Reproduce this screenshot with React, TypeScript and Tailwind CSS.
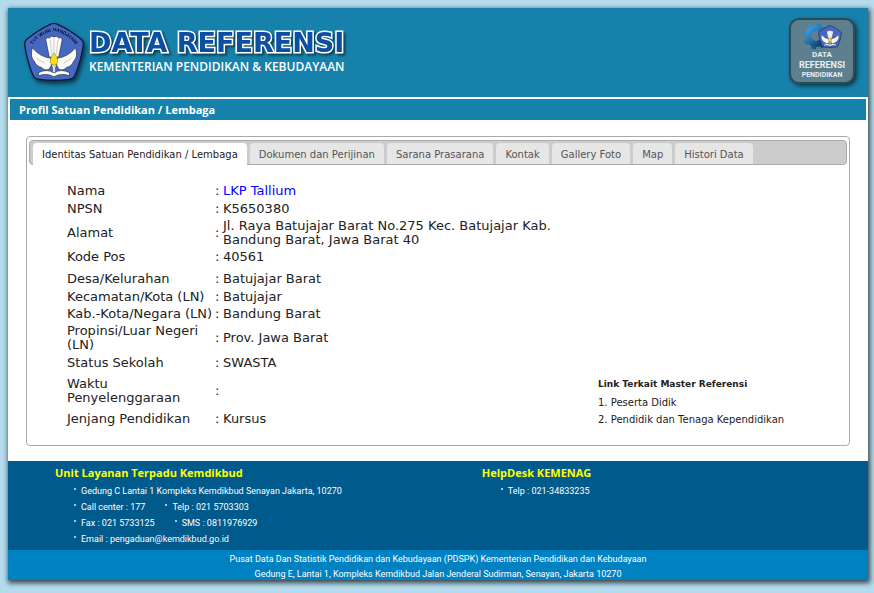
import React, { useState } from 'react';

const tabs = [
    'Identitas Satuan Pendidikan / Lembaga',
    'Dokumen dan Perijinan',
    'Sarana Prasarana',
    'Kontak',
    'Gallery Foto',
    'Map',
    'Histori Data',
];

const rows = [
    { label: 'Nama', value: 'LKP Tallium', link: true, height: 'h-[18px]' },
    { label: 'NPSN', value: 'K5650380', height: 'h-[17px]' },
    { label: 'Alamat', value: 'Jl. Raya Batujajar Barat No.275 Kec. Batujajar Kab. Bandung Barat, Jawa Barat 40', height: 'h-[31px]' },
    { label: 'Kode Pos', value: '40561', height: 'h-[18px]' },
    { label: 'Desa/Kelurahan', value: 'Batujajar Barat', height: 'h-[22px] *:pt-1' },
    { label: 'Kecamatan/Kota (LN)', value: 'Batujajar', height: 'h-[17px]' },
    { label: 'Kab.-Kota/Negara (LN)', value: 'Bandung Barat', height: 'h-[18px]' },
    { label: 'Propinsi/Luar Negeri (LN)', value: 'Prov. Jawa Barat', height: 'h-[30px]' },
    { label: 'Status Sekolah', value: 'SWASTA', height: 'h-[19px]' },
    { label: 'Waktu Penyelenggaraan', value: '', height: 'h-[38px]' },
    { label: 'Jenjang Pendidikan', value: 'Kursus', height: 'h-[18px]' },
];

// bird, flame and open book inside the pentagon, drawn on a 60x60 grid
function Emblem() {
    return (
        <>
            <path
                d="M27 2 Q30 0.8 33 2 Q46 8 56 16.500 Q59 19 58.400 22 Q56 38 50.500 51 Q49 54.800 45.500 55.200 Q30 57.500 14.500 55.200 Q11 54.800 9.500 51 Q4 38 1.600 22 Q1 19 4 16.500 Q14 8 27 2 Z"
                fill="#4668c0"
                stroke="#111c3c"
                strokeWidth="1.3"
            />
            <g fill="#fbfaf5" stroke="#1b2440" strokeWidth="0.6">
                <path d="M22 17 Q23 14 25.500 15.500 Q27.500 12.500 30 14.500 Q32.500 12.500 34.500 15.500 Q37 14 38 17 L34.500 34 H25.500 Z" />
                <path d="M26.500 35 Q17 34 9 25 Q6.500 34 11 38 Q13 43 18 44 Q20 47 25 46 L28 41 Z" />
                <path d="M33.500 35 Q43 34 51 25 Q53.500 34 49 38 Q47 43 42 44 Q40 47 35 46 L32 41 Z" />
                <path d="M15 49 Q23 45 30 49 Q37 45 45 49 L45 52 Q37 49 30 53 Q23 49 15 52 Z" />
            </g>
            <path d="M26 17 L28 32 M30 16 V31 M34 17 L32 32 M13 35 L21 40 M47 35 L39 40" stroke="#b9bdc6" strokeWidth="0.7" fill="none" />
            <path d="M27 41 H33 L31.500 44 V49 H28.500 V44 Z" fill="#d7dbe4" stroke="#333" strokeWidth="0.5" />
            <path d="M30 30 Q35 36 33.200 40 Q30 43.500 26.800 40 Q25 36 30 30 Z" fill="#f4df18" stroke="#92801a" strokeWidth="0.5" />
        </>
    );
}

function KemdikbudLogo() {
    return (
        <svg viewBox="0 0 60 60" className="h-[62px] w-[62px] shrink-0 drop-shadow-[2px_3px_2px_rgba(0,0,0,0.6)]" role="img" aria-label="Tut Wuri Handayani">
            <Emblem />
            <path id="motto" d="M6 27 Q13 13 30 8.500 Q47 13 54 27" fill="none" />
            <text fontSize="4.600" fontWeight="bold" fill="#0d1226" fontFamily="Liberation Sans, sans-serif" textAnchor="middle">
                <textPath href="#motto" startOffset="50%">TUT WURI HANDAYANI</textPath>
            </text>
        </svg>
    );
}

function GearLogo() {
    return (
        <svg viewBox="0 0 44 28" className="h-7 w-11" aria-hidden="true">
            <defs>
                <linearGradient id="gear" x1="0" y1="0" x2="1" y2="1">
                    <stop offset="0" stopColor="#3fa0e0" />
                    <stop offset="1" stopColor="#0a3560" />
                </linearGradient>
            </defs>
            <g fill="none" stroke="url(#gear)">
                <circle cx="16" cy="14" r="8" strokeWidth="6" />
                <circle cx="16" cy="14" r="11.800" strokeWidth="3" strokeDasharray="4.600 4.660" />
            </g>
            <g transform="translate(18 3) scale(0.4)">
                <Emblem />
            </g>
        </svg>
    );
}

function Header() {
    return (
        <header className="flex h-[89px] items-start justify-between bg-[#1682ab] pr-[13px] pl-[15px]">
            <div className="flex items-start gap-1 pt-[14px] text-white">
                <KemdikbudLogo />
                <div className="pt-[7px]">
                    <h1 className="text-[27px] leading-[28px] font-bold text-[#0b4ea2] [-webkit-text-stroke:3px_white] [paint-order:stroke_fill] drop-shadow-[2px_2px_1px_rgba(0,0,0,0.5)]">
                        DATA REFERENSI
                    </h1>
                    <p className="font-['Open_Sans',sans-serif] text-[12px] leading-[20px] font-semibold">KEMENTERIAN PENDIDIKAN &amp; KEBUDAYAAN</p>
                </div>
            </div>
            <a
                href="#"
                className="mt-[10px] flex h-[66px] w-[66px] flex-col items-center rounded-[10px] border-2 border-[#2c4a58] bg-[#5d7f8e] pt-[2px] font-[Roboto,sans-serif] font-bold text-[#e6eef1] shadow-[2px_2px_4px_rgba(0,0,0,0.6)]"
            >
                <GearLogo />
                <span className="text-[8px] leading-[10px]">DATA</span>
                <span className="text-[9px] leading-[11px]">REFERENSI</span>
                <span className="text-[7px] leading-[9px]">PENDIDIKAN</span>
            </a>
        </header>
    );
}

function Bullet({ children }: { children: React.ReactNode }) {
    return (
        <span className="flex items-center gap-[5px]">
            <span className="mb-1 h-[2px] w-[2px] bg-[#8fd0ee]" />
            {children}
        </span>
    );
}

function Footer() {
    return (
        <footer className="font-[Roboto,sans-serif] text-[9px] text-white">
            <div className="flex h-[89px] bg-[#005a8c] pt-[3px] pl-[47px]">
                <section className="w-[52.5%]">
                    <h2 className="mb-px font-['Open_Sans',sans-serif] text-[11px] leading-[18px] font-bold text-[#ffff00]">Unit Layanan Terpadu Kemdikbud</h2>
                    <ul className="pl-[19px] leading-[16px]">
                        <li><Bullet>Gedung C Lantai 1 Kompleks Kemdikbud Senayan Jakarta, 10270</Bullet></li>
                        <li className="flex gap-5">
                            <Bullet>Call center : 177</Bullet>
                            <Bullet>Telp : 021 5703303</Bullet>
                        </li>
                        <li className="flex gap-5">
                            <Bullet>Fax : 021 5733125</Bullet>
                            <Bullet>SMS : 0811976929</Bullet>
                        </li>
                        <li><Bullet>Email : pengaduan@kemdikbud.go.id</Bullet></li>
                    </ul>
                </section>
                <section>
                    <h2 className="mb-px font-['Open_Sans',sans-serif] text-[11px] leading-[18px] font-bold text-[#ffff00]">HelpDesk KEMENAG</h2>
                    <ul className="pl-[19px] leading-[16px]">
                        <li><Bullet>Telp : 021-34833235</Bullet></li>
                    </ul>
                </section>
            </div>
            <div className="h-[30px] bg-[#0081c2] pt-[2px] text-center leading-[15px]">
                <p>Pusat Data Dan Statistik Pendidikan dan Kebudayaan (PDSPK) Kementerian Pendidikan dan Kebudayaan</p>
                <p>Gedung E, Lantai 1, Kompleks Kemdikbud Jalan Jenderal Sudirman, Senayan, Jakarta 10270</p>
            </div>
        </footer>
    );
}

export default function App() {
    const [active, setActive] = useState(0);

    return (
        <div className="min-h-screen bg-[#b4dcee] pt-2 pr-[6px] pb-[13px] pl-2 font-['DejaVu_Sans',sans-serif] text-[#222]">
            <div className="bg-white shadow-[1px_2px_5px_1px_rgba(0,0,0,0.7)]">
                <Header />
                <h2 className="mx-[2px] mt-[2px] bg-[#1682ab] pl-[9px] font-['Open_Sans',sans-serif] text-[11px] leading-[21px] font-bold text-white">
                    Profil Satuan Pendidikan / Lembaga
                </h2>
                <main className="px-[18px] pt-4 pb-[15px]">
                    <div className="rounded-[4px] border border-[#aaa] px-[2px] pt-[3px] pb-[17px]">
                        <div role="tablist" className="flex h-[25px] gap-[3px] rounded-[4px] border border-[#aaa] bg-[#ccc] pt-[2px] pl-[3px] text-[10px]">
                            {tabs.map((tab, index) => (
                                <button
                                    key={tab}
                                    role="tab"
                                    type="button"
                                    aria-selected={index === active}
                                    onClick={() => setActive(index)}
                                    className={
                                        index === active
                                            ? '-mb-px rounded-t-[4px] bg-white px-[9px] whitespace-nowrap text-[#212121]'
                                            : 'rounded-t-[4px] bg-[#e6e6e6] px-[9px] pt-px whitespace-nowrap text-[#555]'
                                    }
                                >
                                    {tab}
                                </button>
                            ))}
                        </div>
                        <div className="flex items-end pt-[17px] pl-[38px]">
                            <div className="flex-1">
                                <table className="text-[13px] leading-[14px]">
                                    <tbody>
                                        {rows.map((row) => (
                                            <tr key={row.label} className={row.height}>
                                                <th scope="row" className="w-[148px] p-0 text-left font-normal">{row.label}</th>
                                                <td className="w-2 p-0">:</td>
                                                <td className="w-[340px] p-0">
                                                    {row.link ? <a href="#" className="text-[#0000ff]">{row.value}</a> : row.value}
                                                </td>
                                            </tr>
                                        ))}
                                    </tbody>
                                </table>
                            </div>
                            <aside className="w-[249px] text-[10px] leading-[17px]">
                                <h3 className="mb-px text-[9px] font-bold">Link Terkait Master Referensi</h3>
                                <p><a href="#">1. Peserta Didik</a></p>
                                <p><a href="#">2. Pendidik dan Tenaga Kependidikan</a></p>
                            </aside>
                        </div>
                    </div>
                </main>
                <Footer />
            </div>
        </div>
    );
}
